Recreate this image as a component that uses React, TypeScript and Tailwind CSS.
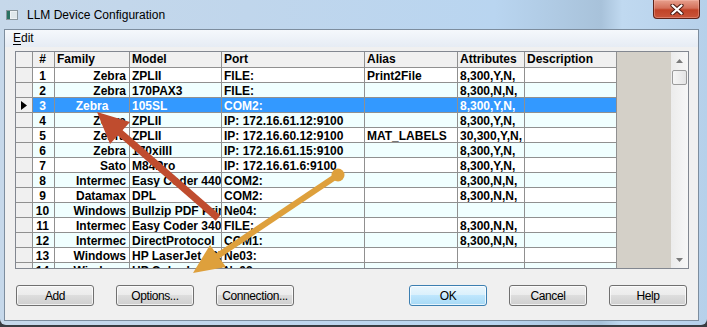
import React from "react";

const rows: string[][] = [
  ["1", "Zebra", "ZPLII", "FILE:", "Print2File", "8,300,Y,N,", ""],
  ["2", "Zebra", "170PAX3", "FILE:", "", "8,300,N,N,", ""],
  ["3", "Zebra", "105SL", "COM2:", "", "8,300,Y,N,", ""],
  ["4", "Zebra", "ZPLII", "IP: 172.16.61.12:9100", "", "8,300,Y,N,", ""],
  ["5", "Zebra", "ZPLII", "IP: 172.16.60.12:9100", "MAT_LABELS", "30,300,Y,N,", ""],
  ["6", "Zebra", "170xiIII", "IP: 172.16.61.15:9100", "", "8,300,Y,N,", ""],
  ["7", "Sato", "M84Pro", "IP: 172.16.61.6:9100", "", "8,300,Y,N,", ""],
  ["8", "Intermec", "Easy Coder 4400", "COM2:", "", "8,300,N,N,", ""],
  ["9", "Datamax", "DPL", "COM2:", "", "8,300,N,N,", ""],
  ["10", "Windows", "Bullzip PDF Printer", "Ne04:", "", "", ""],
  ["11", "Intermec", "Easy Coder 3400", "FILE:", "", "8,300,N,N,", ""],
  ["12", "Intermec", "DirectProtocol", "COM1:", "", "8,300,N,N,", ""],
  ["13", "Windows", "HP LaserJet 4250", "Ne03:", "", "", ""],
  ["14", "Windows", "HP Color LaserJet", "Ne02:", "", "", ""],
];

const headers = ["#", "Family", "Model", "Port", "Alias", "Attributes", "Description"];

const colCls = [
  "w-[22px] text-center pr-[2px]",
  "w-[75px] text-right pr-[3px]",
  "w-[92px] text-left pl-[2px]",
  "w-[143px] text-left pl-[2px]",
  "w-[93px] text-left pl-[2px]",
  "w-[67px] text-left pl-[2px]",
  "w-[92px] text-left pl-[2px]",
];

const cellBase =
  "shrink-0 box-border border-r border-b border-[#909090] overflow-hidden whitespace-nowrap";

function Button({ label, primary }: { label: string; primary?: boolean }) {
  return (
    <div
      className={
        "w-[78px] h-[21px] box-border rounded-[3px] border flex items-center justify-center text-[12px] leading-[14px] tracking-[-0.4px] text-black shadow-[inset_0_0_0_1px_rgba(255,255,255,0.7)] " +
        (primary
          ? "border-[#3c7fb1] bg-[linear-gradient(to_bottom,#eaf6fd_0%,#d9f0fc_50%,#bee6fd_50%,#a7d9f5_100%)]"
          : "border-[#707070] bg-[linear-gradient(to_bottom,#f2f2f2_0%,#ebebeb_50%,#dddddd_50%,#cfcfcf_100%)]")
      }
    >
      {label}
    </div>
  );
}

export default function App() {
  return (
    <div className="relative w-[707px] h-[327px] overflow-hidden bg-[#3a3d42] font-['Liberation_Sans',Arial,sans-serif]">
      {/* Window */}
      <div className="flex flex-col w-[707px] h-[325px] rounded-b-[6px] bg-[linear-gradient(to_right,#c6d8ea_0%,#c0d6ec_35%,#b9d5f0_70%,#a8c2da_85%,#c0d9f0_88%,#b6d0ea_100%)]">
        {/* Title bar */}
        <div className="h-[29px] flex items-start shrink-0 pl-[6px] pr-[7px]">
          <div className="mt-[10px] w-[12px] h-[10px]">
            <svg width="12" height="10" viewBox="0 0 12 10">
              <rect x="0.5" y="0.5" width="11" height="9" fill="#eef2f4" stroke="#8a969c" />
              <rect x="1" y="1" width="3" height="8" fill="#2a7262" />
              <rect x="5" y="2" width="6" height="6" fill="#dfe7ea" />
            </svg>
          </div>
          <div className="ml-[9px] mt-[8px] text-[12px] leading-[14px] text-black">
            LLM Device Configuration
          </div>
          <div className="flex-1" />
          <div className="w-[47px] h-[19px] box-border border border-t-0 border-[#5e2319] rounded-b-[4px] bg-[linear-gradient(to_bottom,#e7a08d_0%,#d4705a_45%,#c14328_55%,#c9553a_100%)] flex items-center justify-center shadow-[inset_0_0_0_1px_rgba(255,200,190,0.35)]">
            <svg width="14" height="11" viewBox="0 0 14 11">
              <path d="M2.5 1.5 L11.5 9.5 M11.5 1.5 L2.5 9.5" stroke="#4a1810" strokeWidth="4.2" strokeLinecap="round" />
              <path d="M2.5 1.5 L11.5 9.5 M11.5 1.5 L2.5 9.5" stroke="#ffffff" strokeWidth="2.3" strokeLinecap="round" />
            </svg>
          </div>
        </div>

        {/* Client area */}
        <div className="ml-[4px] mr-[8px] h-[292px] box-border border border-[#7d8d9e] bg-[#f0f0f0] flex flex-col">
          {/* Menu bar */}
          <div className="h-[17px] shrink-0 bg-[linear-gradient(to_bottom,#f5f8fc,#e6ecf4)] pl-[8px] text-[12px] leading-[17px] text-black">
            <span className="underline underline-offset-[2px]">E</span>dit
          </div>

          {/* Grid */}
          <div className="mt-[4px] ml-[10px] w-[674px] h-[218px] box-border border border-[#828790] flex bg-[#d4d0c8] text-[12px] font-bold text-black">
            <div className="flex-1 flex flex-col overflow-hidden">
              {/* Header */}
              <div className="flex h-[16px] shrink-0">
                <div className={cellBase + " w-[17px] h-[16px] bg-[#f0f0f0]"} />
                {headers.map((h, i) => (
                  <div
                    key={h}
                    className={cellBase + " h-[16px] bg-[#f0f0f0] leading-[14px] " + (i === 0 ? "w-[22px] text-center pr-[2px]" : colCls[i].replace("text-right pr-[3px]", "text-left pl-[2px]"))}
                  >
                    {h}
                  </div>
                ))}
              </div>
              {rows.map((r, ri) => {
                const sel = ri === 2;
                const bg = sel ? "bg-[#3399ff] text-white" : ri % 2 === 1 ? "bg-[#f0ffff]" : "bg-white";
                return (
                  <div key={ri} className="flex h-[15px] shrink-0">
                    <div className={cellBase + " w-[17px] h-[15px] bg-[#f0f0f0] flex items-center pl-[5px]"}>
                      {sel && (
                        <svg width="6" height="9" viewBox="0 0 6 9">
                          <path d="M0 0 L6 4.5 L0 9 Z" fill="#000" />
                        </svg>
                      )}
                    </div>
                    {r.map((c, ci) => (
                      <div
                        key={ci}
                        className={
                          cellBase +
                          " h-[15px] leading-[16px] " +
                          bg +
                          " " +
                          (sel && ci === 1 ? "w-[75px] text-center" : colCls[ci])
                        }
                      >
                        {c}
                      </div>
                    ))}
                  </div>
                );
              })}
            </div>
            {/* Scrollbar */}
            <div className="w-[17px] shrink-0 flex flex-col bg-[linear-gradient(to_right,#ececec,#f7f7f7)]">
              <div className="h-[17px] flex items-center justify-center">
                <svg width="7" height="4" viewBox="0 0 7 4">
                  <path d="M0 4 L3.5 0 L7 4 Z" fill="#7a7a7a" />
                </svg>
              </div>
              <div className="mx-[1px] mt-[1px] h-[15px] box-border rounded-[2px] border border-[#9b9b9b] bg-[linear-gradient(to_right,#f6f6f6,#e4e4e4)]" />
              <div className="flex-1" />
              <div className="h-[17px] flex items-center justify-center">
                <svg width="7" height="4" viewBox="0 0 7 4">
                  <path d="M0 0 L7 0 L3.5 4 Z" fill="#7a7a7a" />
                </svg>
              </div>
            </div>
          </div>

          {/* Buttons */}
          <div className="mt-[16px] px-[11px] flex">
            <div className="flex gap-[22px]">
              <Button label="Add" />
              <Button label="Options..." />
              <Button label="Connection..." />
            </div>
            <div className="flex-1" />
            <div className="flex gap-[22px]">
              <Button label="OK" primary />
              <Button label="Cancel" />
              <Button label="Help" />
            </div>
          </div>
        </div>
      </div>

      {/* Annotation arrows */}
      <svg className="absolute left-0 top-0 pointer-events-none" width="707" height="327" viewBox="0 0 707 327">
        <line x1="218" y1="218" x2="118" y2="131" stroke="#bf4c2e" strokeWidth="7" />
        <polygon points="97,112 130,122 110,144" fill="#bf4c2e" />
        <circle cx="338" cy="175" r="6.5" fill="#dea03c" />
        <line x1="338" y1="175" x2="216" y2="257" stroke="#dea03c" strokeWidth="6" />
        <polygon points="193,273 226,267 210,245" fill="#dea03c" />
      </svg>
    </div>
  );
}
